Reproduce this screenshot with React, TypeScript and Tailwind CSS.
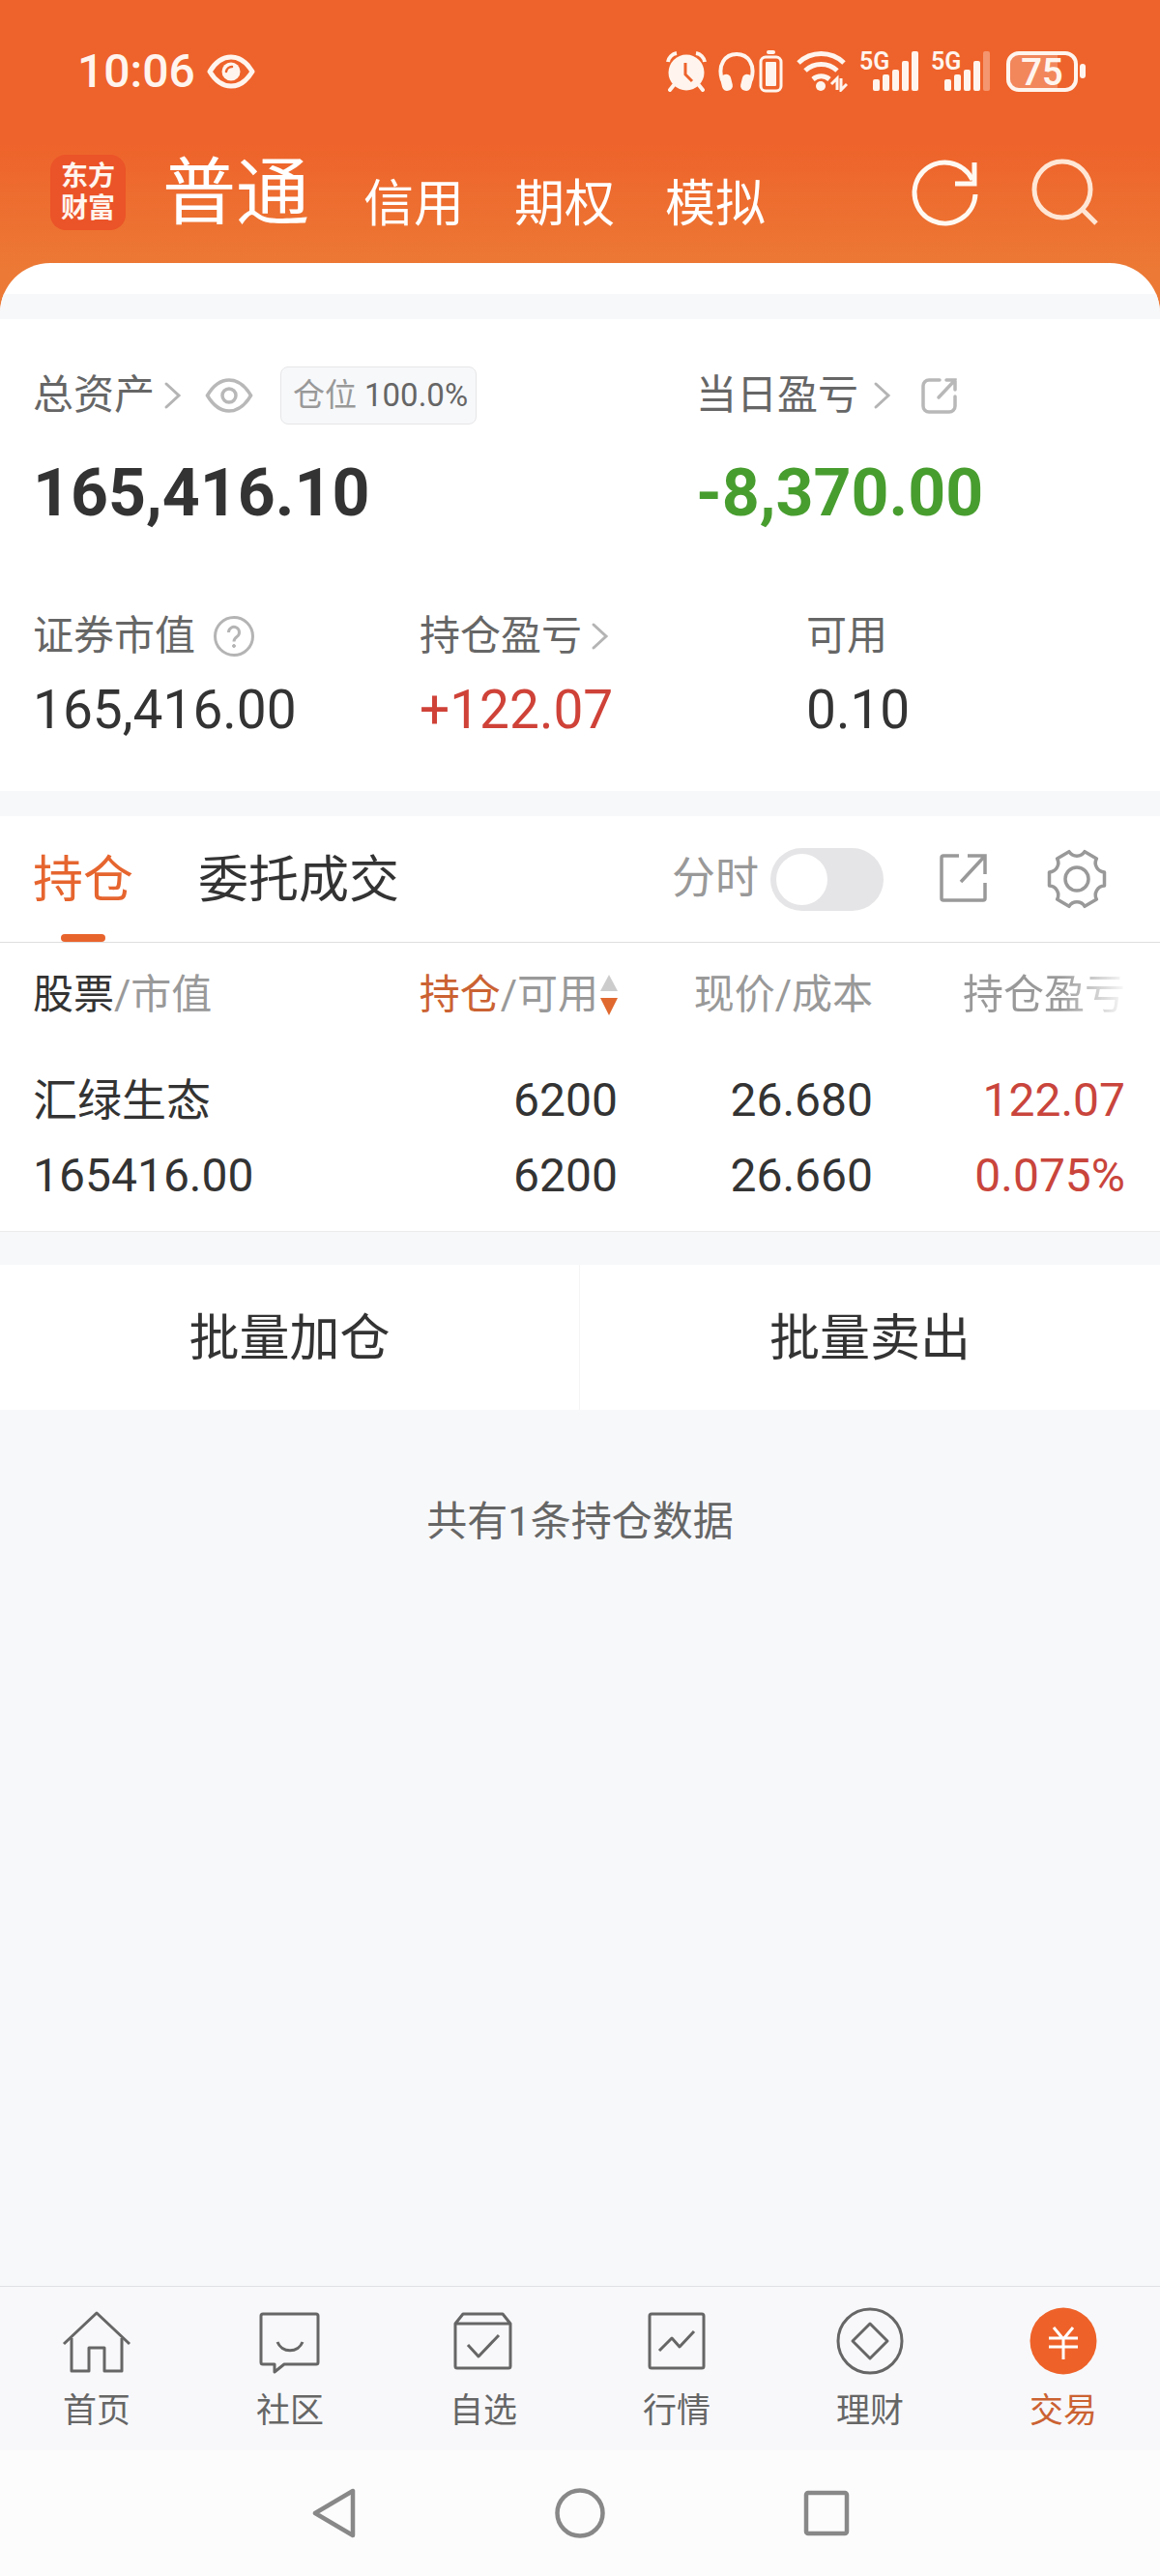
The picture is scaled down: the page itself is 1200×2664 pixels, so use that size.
import { useState, type ReactNode } from 'react'
import clsx from 'clsx'

const accounts = ['信用', '期权', '模拟']

const holdings = [
  {
    name: '汇绿生态',
    value: '165416.00',
    amount: '6200',
    available: '6200',
    price: '26.680',
    cost: '26.660',
    profit: '122.07',
    rate: '0.075%',
  },
]

function AlarmIcon() {
  return (
    <svg width="42" height="42" viewBox="0 0 42 42" fill="none">
      <path d="M8 35l-4 5M34 35l4 5" stroke="#fff5ee" strokeWidth="4" strokeLinecap="round" />
      <path d="M2 11a11 11 0 0 1 9-9M40 11a11 11 0 0 0-9-9" stroke="#fff5ee" strokeWidth="4" />
      <circle cx="21" cy="22" r="18.5" fill="#fff5ee" />
      <path d="M20 12v12l7 7" stroke="#ed632c" strokeWidth="3" />
    </svg>
  )
}

function HeadphonesIcon() {
  return (
    <svg width="38" height="42" viewBox="0 0 38 42" fill="none">
      <path d="M4 30C-1 14 7 3 19 3s20 11 15 27" stroke="#fff5ee" strokeWidth="4" />
      <rect x="3" y="24" width="11" height="17" rx="5" transform="rotate(-14 8 32)" fill="#fff5ee" />
      <rect x="24" y="24" width="11" height="17" rx="5" transform="rotate(14 30 32)" fill="#fff5ee" />
    </svg>
  )
}

function DeviceBatteryIcon() {
  return (
    <svg width="26" height="44" viewBox="0 0 26 44" fill="none">
      <rect x="8" y="0" width="9" height="4" rx="2" fill="#fff5ee" />
      <rect x="2" y="7" width="21" height="35" rx="5" stroke="#fff5ee" strokeWidth="3" />
      <rect x="7" y="12" width="11" height="25" rx="1" fill="#fff5ee" />
    </svg>
  )
}

function WifiIcon() {
  return (
    <svg width="54" height="42" viewBox="0 0 54 42" fill="none">
      <path d="M3 12a34 34 0 0 1 47 0" stroke="#fff5ee" strokeWidth="5" />
      <path d="M10 20a24 24 0 0 1 33 0" stroke="#fff5ee" strokeWidth="5" />
      <path d="M18 29a13 13 0 0 1 17 0" stroke="#fff5ee" strokeWidth="5" />
      <circle cx="26" cy="36" r="5" fill="#fff5ee" />
      <path d="M37 34l6-6v12M53 34l-6 6V28" stroke="#fff5ee" strokeWidth="3" />
    </svg>
  )
}

function SignalIcon({ weak }: { weak?: boolean }) {
  return (
    <svg width="62" height="62" viewBox="0 -10 62 62" fill="#fff5ee">
      <text x="0" y="19" fontSize="25" fontWeight="600">
        5G
      </text>
      <rect x="14" y="29" width="7" height="12" rx="2" />
      <rect x="24" y="24" width="7" height="17" rx="2" />
      <rect x="34" y="19" width="7" height="22" rx="2" />
      <rect x="44" y="10" width="7" height="31" rx="2" />
      <rect x="54" y="0" width="7" height="41" rx="2" opacity={weak ? 0.35 : 1} />
    </svg>
  )
}

function BatteryIcon() {
  return (
    <svg width="82" height="62" viewBox="0 -10 82 62" fill="none">
      <path d="M12 4H53V38H12a8 8 0 0 1-8-8V12a8 8 0 0 1 8-8z" fill="#fff5ee" opacity="0.25" />
      <rect x="2" y="2" width="70" height="38" rx="11" stroke="#fff5ee" strokeWidth="4" />
      <rect x="76" y="13" width="6" height="15" rx="3" fill="#fff5ee" />
      <text x="37" y="35" fontSize="38" fontWeight="600" textAnchor="middle" fill="#fff5ee">
        75
      </text>
    </svg>
  )
}

function StatusBar() {
  return (
    <div className="flex h-37 items-center justify-between pl-20 pr-[77px] text-[#fff5ee]">
      <div className="flex items-center gap-3">
        <span className="text-[48px] leading-[56px] font-medium">10:06</span>
        <svg width="50" height="36" viewBox="0 0 50 36" fill="none">
          <path d="M3 18C9 8 16 3 25 3s16 5 22 15c-6 10-13 15-22 15S9 28 3 18z" stroke="#fff5ee" strokeWidth="5" strokeLinejoin="round" />
          <circle cx="25" cy="18" r="9.5" fill="#fff5ee" />
          <path d="M20 18a6 6 0 0 1 6-5" stroke="#ed632c" strokeWidth="2.5" strokeLinecap="round" />
        </svg>
      </div>
      <div className="flex items-center gap-3">
        <AlarmIcon />
        <div className="flex items-center gap-1">
          <HeadphonesIcon />
          <DeviceBatteryIcon />
        </div>
        <WifiIcon />
        <SignalIcon />
        <SignalIcon weak />
        <div className="pl-1">
          <BatteryIcon />
        </div>
      </div>
    </div>
  )
}

function Header() {
  return (
    <header className="bg-linear-to-b from-[#ee632b] from-45% to-[#ec7935] to-85%">
      <StatusBar />
      <div className="flex h-31 items-start justify-between pl-[52px] pr-16">
        <div className="flex items-start">
          <div className="mt-3 flex size-[78px] items-center justify-center rounded-2xl bg-[#eb5328] text-center text-[28px] leading-[33px] font-bold text-[#fff5ee]">
            东方
            <br />
            财富
          </div>
          <nav className="ml-[38px] flex items-end gap-[52px] pt-[13px] text-[52px] leading-[54px] text-white">
            <a href="#normal" className="pr-1 text-[76px] leading-[78px]">
              普通
            </a>
            {accounts.map((account) => (
              <a key={account} href="#account">
                {account}
              </a>
            ))}
          </nav>
        </div>
        <div className="flex gap-[50px] pt-4">
          <button type="button" aria-label="刷新">
            <svg width="72" height="72" viewBox="0 0 72 72" fill="none" stroke="#fff9f2" strokeWidth="5">
              <path d="M67 37A31.5 31.5 0 1 1 64 22" />
              <path d="M66 4V26H46" />
            </svg>
          </button>
          <button type="button" aria-label="搜索">
            <svg width="72" height="72" viewBox="0 0 72 72" fill="none" stroke="#ffe6d5" strokeWidth="5">
              <circle cx="35" cy="32" r="29" />
              <path d="M55 52L70 67" />
            </svg>
          </button>
        </div>
      </div>
      <div className="overflow-hidden rounded-t-[52px] bg-white pt-8">
        <div className="h-[26px] bg-[#f7f8fa]" />
      </div>
    </header>
  )
}

function Chevron() {
  return (
    <svg width="20" height="30" viewBox="0 0 20 30" fill="none" stroke="#b4b4b4" strokeWidth="3" strokeLinecap="round">
      <path d="M4 3L17 15L4 27" />
    </svg>
  )
}

function Figure({ label, value, icon, tone }: { label: string; value: string; icon?: ReactNode; tone?: string }) {
  return (
    <div className="pl-[34px]">
      <div className="flex items-center text-[42px] leading-[48px] text-[#666]">
        {label}
        {icon}
      </div>
      <div className={clsx('mt-[22px] text-[55px] leading-[60px]', tone ?? 'text-[#333]')}>{value}</div>
    </div>
  )
}

function Summary() {
  return (
    <section className="bg-white pt-[49px] pb-[54px]">
      <div className="grid grid-cols-[43fr_32fr]">
        <div className="pl-[34px]">
          <div className="flex h-15 items-center text-[42px] leading-[48px] text-[#666]">
            总资产
            <span className="ml-2">
              <Chevron />
            </span>
            <button type="button" aria-label="隐藏金额" className="ml-6">
              <svg width="50" height="36" viewBox="0 0 50 36" fill="none" stroke="#b8b8b8" strokeWidth="3.5">
                <path d="M2.5 18C9 7 16 2 25 2s16 5 22.5 16C41 29 34 34 25 34S9 29 2.5 18z" />
                <circle cx="25" cy="18" r="7" />
              </svg>
            </button>
            <span className="ml-7 flex h-15 items-center gap-2 rounded-lg border border-[#e6e6e8] bg-[#f7f8fa] pr-2 pl-3 text-[33px]">
              <span className="text-[#999]">仓位</span>
              <span>100.0%</span>
            </span>
          </div>
          <div className="mt-[35px] text-[68px] leading-[72px] font-bold text-[#333]">165,416.10</div>
        </div>
        <div className="pl-8">
          <div className="flex h-15 items-center text-[42px] leading-[48px] text-[#666]">
            当日盈亏
            <span className="ml-[14px]">
              <Chevron />
            </span>
            <button type="button" aria-label="分享当日盈亏" className="ml-[30px]">
              <svg width="40" height="40" viewBox="0 0 40 40" fill="none" stroke="#b8b8b8" strokeWidth="3.5" strokeLinecap="round">
                <path d="M20 4H9a6 6 0 0 0-6 6V31a6 6 0 0 0 6 6H30a6 6 0 0 0 6-6V21" />
                <path d="M27 4H36V14M36 4L19 22" />
              </svg>
            </button>
          </div>
          <div className="mt-[35px] text-[68px] leading-[72px] font-bold text-[#489d2f]">-8,370.00</div>
        </div>
      </div>
      <div className="mt-[88px] grid grid-cols-3">
        <Figure
          label="证券市值"
          value="165,416.00"
          icon={
            <svg className="ml-[18px]" width="44" height="44" viewBox="0 0 44 44" fill="none" stroke="#b4b4b4" strokeWidth="3">
              <circle cx="22" cy="22" r="19.5" />
              <path d="M16.5 18a5.5 5.5 0 1 1 8.5 4.5c-2 1.5-3 2.5-3 5" />
              <circle cx="22" cy="32" r="1.5" fill="#b4b4b4" strokeWidth="1" />
            </svg>
          }
        />
        <Figure
          label="持仓盈亏"
          value="+122.07"
          tone="text-[#cf4238]"
          icon={
            <span className="ml-2">
              <Chevron />
            </span>
          }
        />
        <Figure label="可用" value="0.10" />
      </div>
    </section>
  )
}

function PositionTabs() {
  const [minute, setMinute] = useState(false)

  return (
    <div className="flex h-[131px] items-center justify-between border-b border-[#dedede] pr-[50px] pl-[34px]">
      <div className="flex h-full gap-[67px] text-[52px] leading-[60px]">
        <button type="button" className="relative pt-1 text-[#e6652f]">
          持仓
          <span className="absolute bottom-0 left-1/2 h-2 w-[46px] -translate-x-1/2 rounded-full bg-[#e8642d]" />
        </button>
        <button type="button" className="pt-1 text-[#333]">
          委托成交
        </button>
      </div>
      <div className="flex items-center gap-[54px]">
        <label className="flex items-center gap-3 text-[45px] leading-[52px] text-[#999]">
          分时
          <input
            type="checkbox"
            role="switch"
            checked={minute}
            onChange={(e) => setMinute(e.target.checked)}
            className="h-[65px] w-[117px] appearance-none rounded-full bg-[#e5e5e7] p-[6px] before:block before:size-[53px] before:rounded-full before:bg-white checked:bg-[#e8642d] checked:before:translate-x-[52px]"
          />
        </label>
        <button type="button" aria-label="分享持仓">
          <svg width="56" height="56" viewBox="0 0 56 56" fill="none" stroke="#999" strokeWidth="3.5">
            <path d="M24 4H8a2 2 0 0 0-2 2V48a2 2 0 0 0 2 2H49a2 2 0 0 0 2-2V32" />
            <path d="M33 4H51V23M51 4L26 31" />
          </svg>
        </button>
        <button type="button" aria-label="设置">
          <svg width="72" height="72" viewBox="0 0 72 72" fill="none" stroke="#999" strokeWidth="3.5" strokeLinejoin="round">
            <path d="M64.5 28.9V43.1A9.5 9.5 0 0 0 56.4 57.1L44.1 64.3A9.5 9.5 0 0 0 27.9 64.3L15.6 57.1A9.5 9.5 0 0 0 7.5 43.1V28.9A9.5 9.5 0 0 0 15.6 14.9L27.9 7.7A9.5 9.5 0 0 0 44.1 7.7L56.4 14.9A9.5 9.5 0 0 0 64.5 28.9Z" />
            <circle cx="36" cy="36" r="12" />
          </svg>
        </button>
      </div>
    </div>
  )
}

function HoldingsTable() {
  return (
    <table className="w-full table-fixed border-b border-[#ececec] text-[#333]">
      <thead>
        <tr className="h-27 text-[42px] leading-[48px] text-[#999] [&>th]:font-normal [&>th]:whitespace-nowrap">
          <th className="w-[31.25%] pl-[34px] text-left">
            <span className="text-[#333]">股票</span>/市值
          </th>
          <th className="w-[22%]">
            <button type="button" className="flex w-full items-center justify-end gap-[2px]">
              <span>
                <span className="text-[#cb6232]">持仓</span>/可用
              </span>
              <svg width="18" height="42" viewBox="0 0 18 42">
                <path d="M9 0L18 17H0z" fill="#ccc" />
                <path d="M9 42L18 24H0z" fill="#e0692f" />
              </svg>
            </button>
          </th>
          <th className="w-[22%] text-right">现价/成本</th>
          <th className="pr-9 text-right">
            <span className="bg-linear-to-r from-[#999] from-60% to-[#999]/5 bg-clip-text text-transparent">持仓盈亏</span>
          </th>
        </tr>
      </thead>
      <tbody>
        {holdings.map((item) => (
          <tr key={item.name} className="text-right text-[48px] leading-[78px] [&>td]:pt-4 [&>td]:pb-[18px]">
            <td className="pl-[34px] text-left">
              <div className="text-[46px]">{item.name}</div>
              <div>{item.value}</div>
            </td>
            <td>
              <div>{item.amount}</div>
              <div>{item.available}</div>
            </td>
            <td>
              <div>{item.price}</div>
              <div>{item.cost}</div>
            </td>
            <td className="pr-9 text-[#c9453c]">
              <div>{item.profit}</div>
              <div>{item.rate}</div>
            </td>
          </tr>
        ))}
      </tbody>
    </table>
  )
}

const tabs: { label: string; icon: ReactNode; active?: boolean }[] = [
  {
    label: '首页',
    icon: (
      <>
        <path d="M2 39L36 7L70 39" />
        <path d="M10 33V67H28V43H44V67H62V33" />
      </>
    ),
  },
  {
    label: '社区',
    icon: (
      <>
        <path d="M8 8H63a2 2 0 0 1 2 2V58a2 2 0 0 1-2 2H30L20 68V60H8a2 2 0 0 1-2-2V10a2 2 0 0 1 2-2z" />
        <path d="M23 37a14 14 0 0 0 26 0" />
      </>
    ),
  },
  {
    label: '自选',
    icon: (
      <>
        <path d="M7 18L15 8H56L64 18V62a2 2 0 0 1-2 2H9a2 2 0 0 1-2-2zM7 18H64" />
        <path d="M20 40L31 52L52 30" />
      </>
    ),
  },
  {
    label: '行情',
    icon: (
      <>
        <rect x="8" y="8" width="56" height="56" rx="2" />
        <path d="M18 46L31 33L39 42L54 26" />
      </>
    ),
  },
  {
    label: '理财',
    icon: (
      <>
        <circle cx="36" cy="36" r="33" />
        <path d="M36 18L54 36L36 54L18 36z" />
      </>
    ),
  },
  {
    label: '交易',
    active: true,
    icon: (
      <>
        <circle cx="36" cy="36" r="34.5" fill="#ee6229" stroke="none" />
        <path d="M26 22L36 34L46 22M21 33H51M21 42H51M36 34V55" stroke="#fff" />
      </>
    ),
  },
]

function TabBar() {
  return (
    <nav className="grid grid-cols-6 border-t border-[#dfe1e4] bg-[#f8f8fa] pt-5 pb-[17px]">
      {tabs.map((tab) => (
        <a
          key={tab.label}
          href="#tab"
          className={clsx(
            'flex flex-col items-center gap-[13px] text-[35px] leading-[47px]',
            tab.active ? 'text-[#cb6232]' : 'text-[#666]',
          )}
        >
          <svg width="72" height="72" viewBox="0 0 72 72" fill="none" stroke="#666" strokeWidth="3" strokeLinejoin="round">
            {tab.icon}
          </svg>
          {tab.label}
        </a>
      ))}
    </nav>
  )
}

function SystemNav() {
  return (
    <div className="flex h-[130px] items-center justify-center gap-[203px] bg-[#fcfcfc]">
      <button type="button" aria-label="返回">
        <svg width="52" height="52" viewBox="0 0 52 52" fill="none" stroke="#888" strokeWidth="4.5" strokeLinejoin="round">
          <path d="M46 3V49L7 26z" />
        </svg>
      </button>
      <button type="button" aria-label="主屏幕">
        <svg width="52" height="52" viewBox="0 0 52 52" fill="none" stroke="#888" strokeWidth="4.5">
          <circle cx="26" cy="26" r="23.5" />
        </svg>
      </button>
      <button type="button" aria-label="最近任务">
        <svg width="52" height="52" viewBox="0 0 52 52" fill="none" stroke="#888" strokeWidth="4.5">
          <rect x="5" y="5" width="42" height="42" rx="2" />
        </svg>
      </button>
    </div>
  )
}

export default function App() {
  return (
    <div className="flex min-h-screen flex-col bg-[#f7f8fa] font-[Roboto,'Noto_Sans_CJK_SC',sans-serif]">
      <Header />
      <main className="flex-1">
        <Summary />
        <section className="mt-[26px] bg-white">
          <PositionTabs />
          <HoldingsTable />
        </section>
        <div className="mt-[34px] grid grid-cols-2 divide-x divide-[#f5f5f5] bg-white text-[52px] leading-[60px] text-[#333]">
          <button type="button" className="h-[150px] pt-1">
            批量加仓
          </button>
          <button type="button" className="h-[150px] pt-1">
            批量卖出
          </button>
        </div>
        <p className="pt-[92px] text-center text-[42px] leading-[48px] text-[#666]">共有1条持仓数据</p>
      </main>
      <TabBar />
      <SystemNav />
    </div>
  )
}
